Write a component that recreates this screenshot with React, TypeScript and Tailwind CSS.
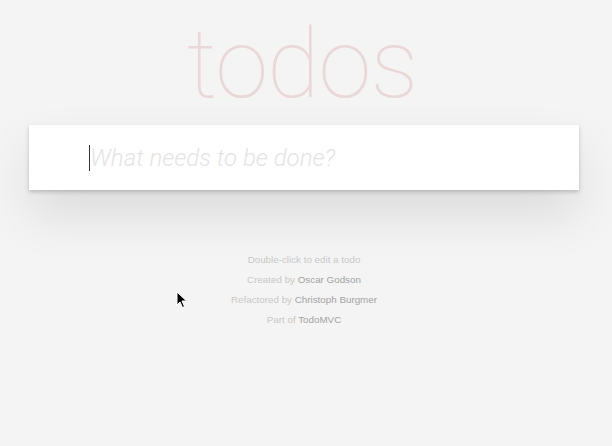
import React from 'react';

const App: React.FC = () => {
  return (
    <div className="relative min-h-screen bg-[#f4f4f4] font-['Liberation_Sans',sans-serif] overflow-hidden">
      <div className="w-[550px] ml-[29px]">
        {/* Title */}
        <h1 className="h-[125px] pt-[16px] text-center text-[96px] leading-[96px] font-thin text-[#ead7d7] font-['Roboto',sans-serif] tracking-[-1px] pr-[4px]">
          todos
        </h1>

        {/* New todo input */}
        <div className="bg-white h-[65px] shadow-[0_2px_4px_rgba(0,0,0,0.2),0_25px_50px_rgba(0,0,0,0.1)] flex items-center pl-[60px]">
          <div className="w-px h-[26px] bg-[#333]" />
          <span className="text-[24px] italic font-light text-[#e4e4e4] font-['Roboto',sans-serif]">
            What needs to be done?
          </span>
        </div>
      </div>

      {/* Info footer */}
      <footer className="mt-[60px] text-center text-[9.8px] leading-[20px] text-[#c8c8c8] w-[608px]">
        <p>Double-click to edit a todo</p>
        <p>
          Created by <span className="text-[#a3a3a3]">Oscar Godson</span>
        </p>
        <p>
          Refactored by <span className="text-[#a3a3a3]">Christoph Burgmer</span>
        </p>
        <p>
          Part of <span className="text-[#a3a3a3]">TodoMVC</span>
        </p>
      </footer>

      {/* Mouse pointer */}
      <svg className="absolute left-[176px] top-[291px]" width="12" height="18" viewBox="0 0 12 18">
        <path d="M1 1 L1 14 L4 11 L6.5 16.5 L8.5 15.5 L6 10 L10.5 10 Z" fill="#000" stroke="#fff" strokeWidth="1" />
      </svg>
    </div>
  );
};

export default App;
